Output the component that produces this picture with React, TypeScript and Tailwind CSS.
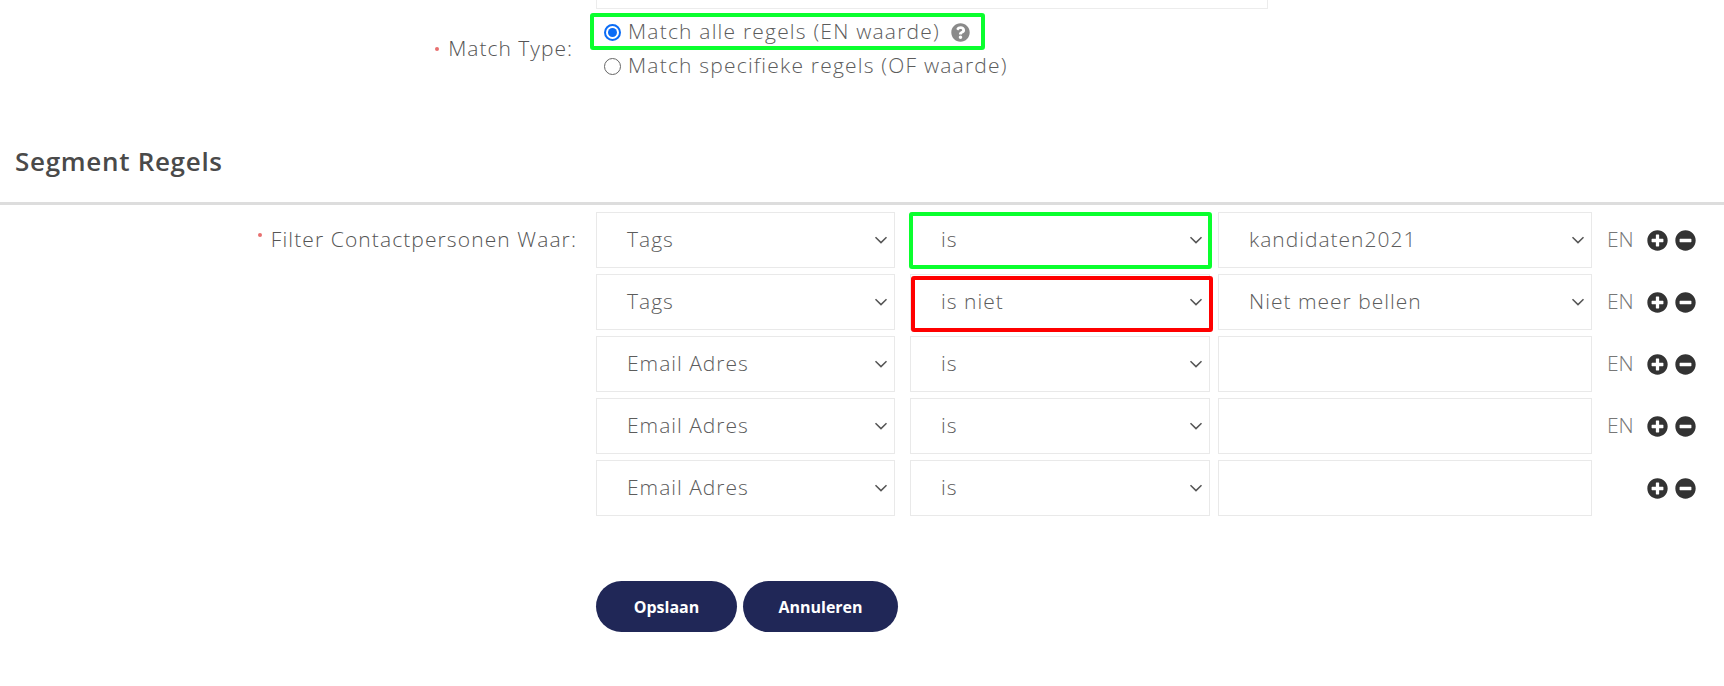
import { FaPlusCircle, FaMinusCircle, FaQuestionCircle } from "react-icons/fa";

interface Rule {
  field: string;
  op: string;
  value: string;
  valueIsSelect: boolean;
  showEn: boolean;
  mark?: "green" | "red";
}

const rules: Rule[] = [
  { field: "Tags", op: "is", value: "kandidaten2021", valueIsSelect: true, showEn: true, mark: "green" },
  { field: "Tags", op: "is niet", value: "Niet meer bellen", valueIsSelect: true, showEn: true, mark: "red" },
  { field: "Email Adres", op: "is", value: "", valueIsSelect: false, showEn: true },
  { field: "Email Adres", op: "is", value: "", valueIsSelect: false, showEn: true },
  { field: "Email Adres", op: "is", value: "", valueIsSelect: false, showEn: false },
];

function Chevron() {
  return (
    <svg width="14" height="8" viewBox="0 0 14 8" className="shrink-0">
      <path d="M1.5 1.2 L7 6.6 L12.5 1.2" fill="none" stroke="#555" strokeWidth="1.5" />
    </svg>
  );
}

function SelectBox({ text, width, chevron = true }: { text: string; width: string; chevron?: boolean }) {
  return (
    <div
      className={`${width} h-[56px] border border-[#e9e9e9] bg-white flex items-center justify-between pl-[30px] pr-[6px]`}
    >
      <span className="text-[21px] font-light tracking-[1px] text-[#5c5c5c]">{text}</span>
      {chevron && <Chevron />}
    </div>
  );
}

function Required() {
  return <span className="inline-block w-[4px] h-[4px] rounded-full bg-[#e8706f] mr-[9px] relative -top-[5px]" />;
}

export default function App() {
  return (
    <div className="w-[1724px] h-[686px] bg-white overflow-hidden font-['Open_Sans',sans-serif] text-[#666]">
      {/* bottom of previous input */}
      <div className="ml-[596px] w-[672px] h-[9px] border-x border-b border-[#ececec]" />

      {/* Match type */}
      <div className="flex items-center mt-[6px]">
        <div className="w-[596px] shrink-0 pr-[23px] text-right text-[21px] font-light tracking-[1px] text-[#555]">
          <Required />
          Match Type:
        </div>
        <div className="flex flex-col">
          <div className="relative h-[34px] flex items-center pl-[8px]">
            <div className="absolute -left-[6px] -top-[2px] w-[395px] h-[37px] border-4 border-[#0aff2e] rounded-[3px]" />
            <span className="w-[17px] h-[17px] rounded-full border-2 border-[#0b6cf5] flex items-center justify-center">
              <span className="w-[9px] h-[9px] rounded-full bg-[#0b6cf5]" />
            </span>
            <span className="ml-[7px] text-[21px] font-light tracking-[1.2px] text-[#5c5c5c]">
              Match alle regels (EN waarde)
            </span>
            <FaQuestionCircle className="ml-[11px] text-[#8a8a8a]" size={19} />
          </div>
          <div className="h-[34px] flex items-center pl-[8px]">
            <span className="w-[17px] h-[17px] rounded-full border-[1.5px] border-[#666]" />
            <span className="ml-[7px] text-[21px] font-light tracking-[1.2px] text-[#5c5c5c]">
              Match specifieke regels (OF waarde)
            </span>
          </div>
        </div>
      </div>

      {/* Segment Regels */}
      <h2 className="mt-[61px] pl-[15px] h-[34px] leading-[34px] text-[26px] font-semibold tracking-[0.7px] text-[#4a4a4a]">
        Segment Regels
      </h2>
      <div className="mt-[24px] h-[3px] bg-[#dddddd]" />

      <div className="flex mt-[7px]">
        <div className="w-[596px] shrink-0 pr-[19px] h-[56px] flex items-center justify-end text-[21px] font-light tracking-[1.1px] text-[#555]">
          <Required />
          Filter Contactpersonen Waar:
        </div>
        <div className="flex flex-col gap-[6px]">
          {rules.map((r, i) => (
            <div key={i} className="flex items-center">
              <SelectBox text={r.field} width="w-[299px]" />
              <div className="relative ml-[15px]">
                <SelectBox text={r.op} width="w-[300px]" />
                {r.mark === "green" && (
                  <div className="absolute -left-[1px] top-0 w-[303px] h-[57px] border-4 border-[#0aff2e] rounded-[3px]" />
                )}
                {r.mark === "red" && (
                  <div className="absolute left-[1px] top-[2px] w-[302px] h-[56px] border-4 border-[#ff0000] rounded-[3px]" />
                )}
              </div>
              <div className="ml-[8px]">
                <SelectBox text={r.value} width="w-[374px]" chevron={r.valueIsSelect} />
              </div>
              <div className="ml-[15px] w-[40px] text-[21px] font-light text-[#777]">{r.showEn ? "EN" : ""}</div>
              <FaPlusCircle className="text-[#333]" size={21} />
              <FaMinusCircle className="ml-[7px] text-[#333]" size={21} />
            </div>
          ))}
        </div>
      </div>

      <div className="ml-[596px] mt-[65px] flex gap-[6px]">
        <button className="w-[141px] h-[51px] rounded-full bg-[#202757] text-white text-[16px] font-bold">
          Opslaan
        </button>
        <button className="w-[155px] h-[51px] rounded-full bg-[#202757] text-white text-[16px] font-bold">
          Annuleren
        </button>
      </div>
    </div>
  );
}
